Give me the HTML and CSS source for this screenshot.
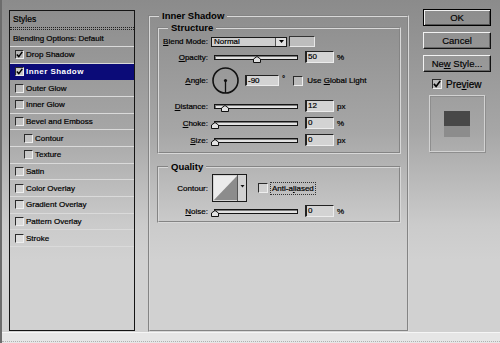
FILE: index.html
```html
<!DOCTYPE html>
<html lang="en">
<head>
  <meta charset="UTF-8">
  <meta name="viewport" content="width=device-width, initial-scale=1.0">
  <title>Layer Style</title>
  <link rel="stylesheet" href="styles.css">
</head>
<body>
  <div class="window">
    <div class="dialog">
      <div class="style-list">
        <div class="list-head">Styles</div>
        <div class="list-item blend">Blending Options: Default</div>
        <div class="list-item"><span class="check"><svg width="7" height="7" viewBox="0 0 7 7"><path d="M0.8 3.4 L2.8 5.6 L6.3 0.9" fill="none" stroke="#000" stroke-width="1.5"/></svg></span>Drop Shadow</div>
        <div class="list-item selected"><span class="check"><svg width="7" height="7" viewBox="0 0 7 7"><path d="M0.8 3.4 L2.8 5.6 L6.3 0.9" fill="none" stroke="#000" stroke-width="1.5"/></svg></span>Inner Shadow</div>
        <div class="list-item"><span class="check"></span>Outer Glow</div>
        <div class="list-item"><span class="check"></span>Inner Glow</div>
        <div class="list-item"><span class="check"></span>Bevel and Emboss</div>
        <div class="list-item sub"><span class="check"></span>Contour</div>
        <div class="list-item sub"><span class="check"></span>Texture</div>
        <div class="list-item"><span class="check"></span>Satin</div>
        <div class="list-item"><span class="check"></span>Color Overlay</div>
        <div class="list-item"><span class="check"></span>Gradient Overlay</div>
        <div class="list-item"><span class="check"></span>Pattern Overlay</div>
        <div class="list-item"><span class="check"></span>Stroke</div>
      </div>

      <fieldset class="group main">
        <legend class="main-legend">Inner Shadow</legend>
        <fieldset class="group structure">
          <legend>Structure</legend>
          <div class="row row-blend">
            <label class="lbl"><u>B</u>lend Mode:</label>
            <div class="select">
              <span class="select-text">Normal</span>
              <span class="select-btn"><svg width="5" height="3" viewBox="0 0 5 3"><polygon points="0,0 5,0 2.5,3" fill="#000"/></svg></span>
            </div>
            <div class="swatch"></div>
          </div>
          <div class="row row-opacity">
            <label class="lbl"><u>O</u>pacity:</label>
            <div class="slider"><span class="thumb" style="left: 38px"><svg width="8" height="7" viewBox="0 0 8 7"><polygon points="4,0.5 7.5,3 7.5,6.5 0.5,6.5 0.5,3" fill="#e2e2e2" stroke="#111"/></svg></span></div>
            <div class="field">50</div><span class="unit">%</span>
          </div>
          <div class="row row-angle">
            <label class="lbl"><u>A</u>ngle:</label>
            <svg class="dial" width="27" height="27" viewBox="0 0 27 27">
              <circle cx="13.5" cy="13.5" r="12.5" fill="none" stroke="#111" stroke-width="1.6"/>
              <line x1="13.5" y1="13.5" x2="13.5" y2="26" stroke="#111" stroke-width="1.3"/>
              <circle cx="13.5" cy="13.5" r="1.6" fill="#111"/>
            </svg>
            <div class="field wide">-90</div><span class="deg">°</span>
            <span class="box global"></span><span class="box-text">Use <u>G</u>lobal Light</span>
          </div>
          <div class="row row-distance">
            <label class="lbl"><u>D</u>istance:</label>
            <div class="slider"><span class="thumb" style="left: 6px"><svg width="8" height="7" viewBox="0 0 8 7"><polygon points="4,0.5 7.5,3 7.5,6.5 0.5,6.5 0.5,3" fill="#e2e2e2" stroke="#111"/></svg></span></div>
            <div class="field">12</div><span class="unit">px</span>
          </div>
          <div class="row row-choke">
            <label class="lbl"><u>C</u>hoke:</label>
            <div class="slider"><span class="thumb" style="left: -4px"><svg width="8" height="7" viewBox="0 0 8 7"><polygon points="4,0.5 7.5,3 7.5,6.5 0.5,6.5 0.5,3" fill="#e2e2e2" stroke="#111"/></svg></span></div>
            <div class="field">0</div><span class="unit">%</span>
          </div>
          <div class="row row-size">
            <label class="lbl"><u>S</u>ize:</label>
            <div class="slider"><span class="thumb" style="left: -4px"><svg width="8" height="7" viewBox="0 0 8 7"><polygon points="4,0.5 7.5,3 7.5,6.5 0.5,6.5 0.5,3" fill="#e2e2e2" stroke="#111"/></svg></span></div>
            <div class="field">0</div><span class="unit">px</span>
          </div>
        </fieldset>

        <fieldset class="group quality">
          <legend>Quality</legend>
          <div class="row row-contour">
            <label class="lbl">Contour:</label>
            <svg class="contour" width="35" height="28" viewBox="0 0 35 28">
              <rect x="0.5" y="0.5" width="34" height="27" fill="#d2d2d2" stroke="#1a1a1a"/>
              <polygon points="2,2 25,2 2,26" fill="#ebebeb"/>
              <polygon points="25,2 25,26 2,26" fill="#8c8c8c"/>
              <line x1="25.5" y1="1" x2="25.5" y2="27" stroke="#555"/>
              <polygon points="28.5,11 32.5,11 30.5,13.5" fill="#111"/>
            </svg>
            <span class="box anti"></span><span class="box-text focus">Anti-a<u>l</u>iased</span>
          </div>
          <div class="row row-noise">
            <label class="lbl"><u>N</u>oise:</label>
            <div class="slider"><span class="thumb" style="left: -4px"><svg width="8" height="7" viewBox="0 0 8 7"><polygon points="4,0.5 7.5,3 7.5,6.5 0.5,6.5 0.5,3" fill="#e2e2e2" stroke="#111"/></svg></span></div>
            <div class="field">0</div><span class="unit">%</span>
          </div>
        </fieldset>
      </fieldset>

      <div class="side">
        <button class="btn btn-default">OK</button>
        <button class="btn">Cancel</button>
        <button class="btn">Ne<u>w</u> Style...</button>
        <div class="preview-row">
          <span class="box"><svg width="8" height="8" viewBox="0 0 8 8"><path d="M0.9 3.9 L3.1 6.4 L7.2 1" fill="none" stroke="#000" stroke-width="1.6"/></svg></span>
          <span class="preview-text">Pre<u>v</u>iew</span>
        </div>
        <div class="preview">
          <div class="preview-swatch"></div>
        </div>
      </div>
    </div>
    <div class="strip"></div>
  </div>
</body>
</html>
```

FILE: styles.css
```css
body {
  margin: 0;
  height: 343px;
  overflow: hidden;
  font-family: "Liberation Sans", Arial, sans-serif;
  font-size: 8px;
  color: #000;
  -webkit-text-stroke: 0.2px #000;
  background: linear-gradient(to bottom, #8b8b8b 0px, #a6a6a6 130px, #cbcbcb 225px, #d1d1d1 260px, #d1d1d1 100%);
}
.window {
  height: 343px;
  border-left: 2px solid #6c6c6c;
  box-sizing: border-box;
}
.dialog {
  display: flex;
  align-items: flex-start;
  height: 332px;
  padding-left: 7px;
}

/* styles list */
.style-list {
  margin-top: 10px;
  width: 126px;
  height: 321px;
  box-sizing: border-box;
  border: 1px solid #141414;
  flex-shrink: 0;
}
.list-head {
  height: 16px;
  line-height: 16px;
  padding-left: 3px;
  font-size: 8.5px;
  border-bottom: 1px dotted #222;
  margin-bottom: 1px;
}
.list-item {
  display: flex;
  align-items: center;
  height: 15.67px;
  padding-left: 5px;
  border-bottom: 1px solid #dadada;
}
.list-item.blend {
  height: 16px;
  padding-left: 3px;
  border-top: 1px dotted #222;
}
.list-item.sub {
  padding-left: 14px;
}
.list-item.selected {
  background-color: #0b0b78;
  color: #fff;
  -webkit-text-stroke: 0;
  font-weight: bold;
  letter-spacing: 0.45px;
  border-bottom-color: #0b0b78;
}
.check, .box {
  display: inline-flex;
  align-items: center;
  justify-content: center;
  width: 9px;
  height: 9px;
  box-sizing: border-box;
  border: 1px solid;
  border-color: #2a2a2a #eeeeee #eeeeee #2a2a2a;
  background-color: rgba(255, 255, 255, 0.3);
  margin-right: 2px;
  flex-shrink: 0;
}
.selected .check {
  background-color: #c8c8c8;
}

/* option groups */
.group {
  margin: 0;
  padding: 0;
  min-width: 0;
  border: 2px groove #d8d8d8;
}
.group legend {
  padding: 0 3px;
  margin-left: 9px;
  font-size: 9.5px;
  font-weight: bold;
  line-height: 11px;
  -webkit-text-stroke: 0;
}
.group .main-legend {
  margin-left: 2px;
}
.main {
  margin: 10px 0 0 13px;
  width: 261px;
  height: 322px;
  box-sizing: border-box;
  padding: 1px 6px 0 7px;
  flex-shrink: 0;
}
.structure {
  padding: 3px 0 6px 0;
}
.quality {
  margin-top: 7px;
  padding: 2px 0 4px 0;
}

.row {
  display: flex;
  align-items: center;
}
.lbl {
  width: 49px;
  text-align: right;
  flex-shrink: 0;
}
.row-blend { height: 11px; margin-bottom: 4px; }
.row-opacity { height: 12px; margin-bottom: 4px; }
.row-angle { height: 27px; margin-bottom: 6px; }
.row-distance { height: 12px; margin-bottom: 5px; }
.row-choke { height: 12px; margin-bottom: 5px; }
.row-size { height: 12px; }
.row-contour { height: 28px; }
.row-noise { height: 12px; margin-top: 3px; }

.select {
  display: flex;
  margin-left: 3px;
  width: 76px;
  height: 10px;
  box-sizing: border-box;
  border: 1px solid #1a1a1a;
  background-color: #cfcfcf;
}
.select-text {
  flex: 1;
  line-height: 8px;
  padding-left: 2px;
}
.select-btn {
  display: flex;
  align-items: center;
  justify-content: center;
  width: 10px;
  border-left: 1px solid #555;
  background-color: #e0e0e0;
}
.swatch {
  margin-left: 2px;
  width: 26px;
  height: 11px;
  box-sizing: border-box;
  border: 1px solid;
  border-color: #333 #e8e8e8 #e8e8e8 #333;
  background-color: #bdbdbd;
}

.slider {
  position: relative;
  margin-left: 6px;
  width: 84px;
  height: 5px;
  box-sizing: border-box;
  border: 1px solid #151515;
  background-color: #e2e2e2;
  box-shadow: inset 1px 1px 0 #7a7a7a;
}
.thumb {
  position: absolute;
  top: 0;
  width: 8px;
  height: 7px;
  display: flex;
}
.field {
  margin-left: 7px;
  width: 29px;
  height: 12px;
  box-sizing: border-box;
  border: 1px solid;
  border-left-width: 2px;
  border-color: #222 #ececec #ececec #222;
  background-color: #d3d3d3;
  line-height: 10px;
  padding-left: 1px;
}
.field.wide {
  margin-left: 6px;
  width: 34px;
  height: 11px;
  line-height: 9px;
}
.unit {
  margin-left: 3px;
}
.dial {
  margin-left: 4px;
  flex-shrink: 0;
}
.deg {
  margin-left: 3px;
  margin-top: -4px;
}
.box.global {
  width: 10px;
  height: 10px;
  margin-left: 8px;
  margin-right: 0;
}
.box-text {
  margin-left: 4px;
}
.contour {
  margin-left: 4px;
  flex-shrink: 0;
}
.box.anti {
  width: 10px;
  height: 10px;
  margin-left: 11px;
  margin-right: 0;
}
.box-text.focus {
  margin-left: 3px;
  padding: 1px 1px;
  outline: 1px dotted #333;
}

/* buttons column */
.side {
  margin: 9px 0 0 14px;
  width: 68px;
  display: flex;
  flex-direction: column;
  flex-shrink: 0;
}
.btn {
  height: 17px;
  margin: 0 0 6px 0;
  padding: 0;
  font-family: inherit;
  font-size: 9.5px;
  color: #000;
  -webkit-text-stroke: 0.15px #000;
  background: transparent;
  border: 1px solid;
  border-color: #f2f2f2 #111 #111 #f2f2f2;
  box-shadow: inset -1px -1px 0 #666;
}
.btn-default {
  border-color: #000;
  box-shadow: inset 1px 1px 0 #f0f0f0, inset -1px -1px 0 #555;
}
.preview-row {
  display: flex;
  align-items: center;
  height: 12px;
  padding-left: 9px;
}
.preview-row .box {
  width: 10px;
  height: 10px;
  margin-right: 0;
}
.preview-text {
  margin-left: 4px;
  font-size: 10px;
}
.preview {
  margin: 5px 0 0 6px;
  width: 56px;
  height: 57px;
  box-sizing: border-box;
  border: 1px solid #d2d2d2;
  box-shadow: inset 1px 1px 0 #8e8e8e, 1px 1px 0 #8e8e8e;
  display: flex;
  align-items: center;
  justify-content: center;
}
.preview-swatch {
  width: 26px;
  height: 26px;
  background: linear-gradient(to bottom, #484848 0, #484848 15px, #8c8c8c 15px, #8c8c8c 100%);
}

.strip {
  height: 8px;
  border-top: 1px solid #f6f6f6;
  border-bottom: 1px dotted #b0b0b0;
  background-color: #e6e6e6;
  box-shadow: 0 1px 0 #e6e6e6;
}
```
